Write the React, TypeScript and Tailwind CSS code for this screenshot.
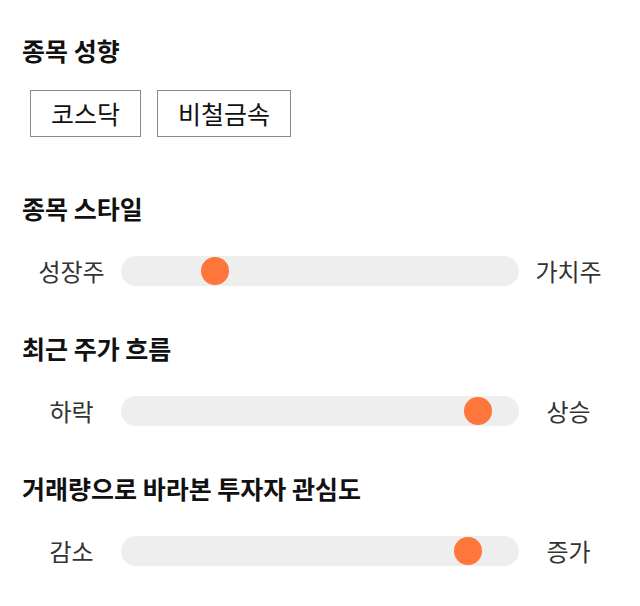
const font = { fontFamily: '"Noto Sans CJK KR", "Noto Sans", sans-serif' }

const tags = ['코스닥', '비철금속']

const sliders = [
  { title: '종목 스타일', left: '성장주', right: '가치주', value: 23.6 },
  { title: '최근 주가 흐름', left: '하락', right: '상승', value: 89.7 },
  { title: '거래량으로 바라본 투자자 관심도', left: '감소', right: '증가', value: 87.2 },
]

function Slider({ left, right, value }: { left: string; right: string; value: number }) {
  return (
    <div className="flex items-center h-[30px] -mr-[22px]">
      <span className="w-[99px] text-center text-[24px] text-[#333]">{left}</span>
      <div className="relative w-[398px] h-[30px] rounded-full bg-[#eeeeee]">
        <div
          className="absolute top-1/2 w-[28px] h-[28px] -translate-x-1/2 -translate-y-1/2 rounded-full bg-[#ff763b]"
          style={{ left: `${value}%` }}
        />
      </div>
      <span className="w-[99px] text-center text-[24px] text-[#333]">{right}</span>
    </div>
  )
}

export default function App() {
  return (
    <div className="w-[640px] h-[606px] bg-white px-[22px] pt-[34px]" style={font}>
      <h2 className="text-[25px] leading-8 font-bold text-[#111]">종목 성향</h2>
      <div className="flex gap-4 ml-2 mt-6">
        {tags.map((t) => (
          <div
            key={t}
            className="h-[47px] px-[20px] flex items-center border border-[#8a8a8a] text-[25px] text-[#111]"
          >
            {t}
          </div>
        ))}
      </div>

      {sliders.map((s, i) => (
        <div key={s.title} className={i === 0 ? 'mt-[55px]' : 'mt-[46px]'}>
          <h2 className="text-[25px] leading-8 font-bold text-[#111]">{s.title}</h2>
          <div className="mt-8">
            <Slider left={s.left} right={s.right} value={s.value} />
          </div>
        </div>
      ))}
    </div>
  )
}
